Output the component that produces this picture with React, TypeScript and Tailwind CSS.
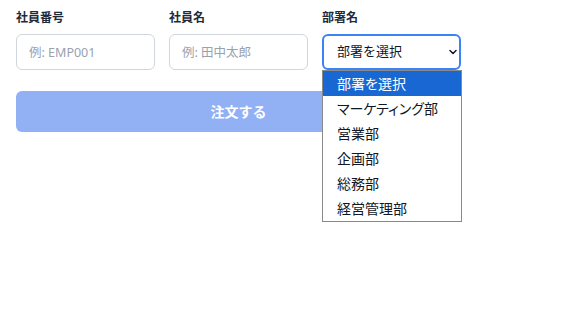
import { ChevronDown } from 'lucide-react';

const departments = ['部署を選択', 'マーケティング部', '営業部', '企画部', '総務部', '経営管理部'];

const font = { fontFamily: '"Noto Sans", "Noto Sans CJK JP", sans-serif' };

export default function App() {
  return (
    <div className="bg-white min-h-[323px] px-4 pt-[9px]" style={font}>
      <div className="w-[445px]">
        {/* ── Fields ─────────────────────────── */}
        <div className="grid grid-cols-3 gap-[14px]">
          <div>
            <label className="block text-xs font-semibold leading-[18px] mb-[7px] text-gray-800">社員番号</label>
            <input
              className="w-full h-9 rounded-md border border-gray-300 px-3 text-[12.5px] text-gray-800 placeholder:text-gray-400 outline-none"
              placeholder="例: EMP001"
            />
          </div>
          <div>
            <label className="block text-xs font-semibold leading-[18px] mb-[7px] text-gray-800">社員名</label>
            <input
              className="w-full h-9 rounded-md border border-gray-300 px-3 text-[12.5px] text-gray-800 placeholder:text-gray-400 outline-none"
              placeholder="例: 田中太郎"
            />
          </div>
          <div>
            <label className="block text-xs font-semibold leading-[18px] mb-[7px] text-gray-800">部署名</label>
            <div className="relative">
              <div className="h-9 rounded-md border-2 border-[#3b82f6] flex items-center justify-between pl-[13px] pr-0 text-[13px] text-gray-900">
                <span>部署を選択</span>
                <ChevronDown size={12} strokeWidth={3} className="text-gray-900" />
              </div>
              {/* ── Open option list ─────────── */}
              <ul className="absolute left-0 top-full w-[140px] bg-white border border-[#8a8a8a] z-10 [font-feature-settings:'palt']">
                {departments.map((d, i) => (
                  <li
                    key={d}
                    className={`h-[25px] flex items-center pl-[14px] text-sm ${
                      i === 0 ? 'bg-[#1967d2] text-white' : 'text-gray-900'
                    }`}
                  >
                    {d}
                  </li>
                ))}
              </ul>
            </div>
          </div>
        </div>

        {/* ── Submit ─────────────────────────── */}
        <button className="mt-[21px] w-full h-[41px] rounded-md bg-[#92b1f5] text-white text-sm font-bold">
          注文する
        </button>
      </div>
    </div>
  );
}
